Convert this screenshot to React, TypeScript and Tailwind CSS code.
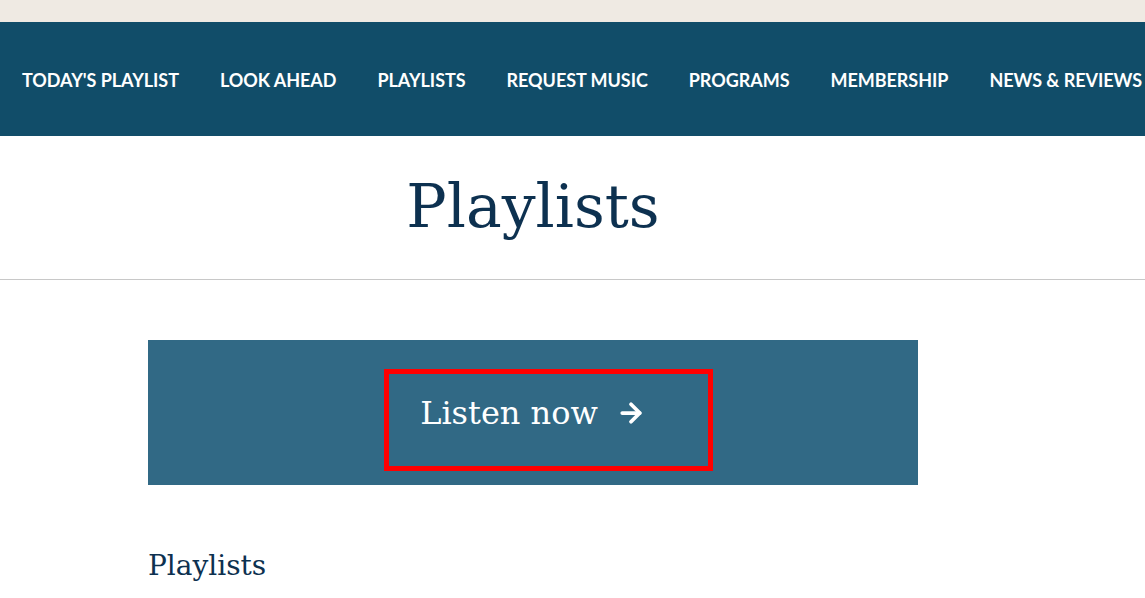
import { ArrowRight } from "lucide-react"

const navItems = [
  "TODAY'S PLAYLIST",
  "LOOK AHEAD",
  "PLAYLISTS",
  "REQUEST MUSIC",
  "PROGRAMS",
  "MEMBERSHIP",
  "NEWS & REVIEWS",
]

export default function App() {
  return (
    <div className="min-h-screen bg-white overflow-hidden" style={{ width: 1145 }}>
      <div className="h-[22px] bg-[#efeae3]" />

      <nav className="h-[114px] bg-[#114d69] flex items-center pl-[22px] pt-[2px] gap-[41px] whitespace-nowrap">
        {navItems.map((item) => (
          <a
            key={item}
            href="#"
            className="text-white font-bold text-[18px] tracking-[-0.05px] font-['Lato',sans-serif]"
          >
            {item}
          </a>
        ))}
      </nav>

      <header className="h-[144px] border-b border-[#c8c8c8] flex items-center">
        <div className="ml-[148px] w-[770px] flex justify-center pb-[4px]">
          <h1 className="text-[60px] text-[#0d3150] font-['DejaVu_Serif',serif] leading-none">
            Playlists
          </h1>
        </div>
      </header>

      <main className="ml-[148px] w-[770px] pt-[60px]">
        <div className="h-[145px] bg-[#316985] flex items-center justify-center">
          <a href="#" className="relative flex items-center h-[40px] text-white">
            <span className="text-[32px] font-['DejaVu_Serif',serif] leading-none">Listen now</span>
            <ArrowRight className="ml-[18px] w-[30px] h-[30px]" strokeWidth={3} />
            <span className="absolute -left-[36px] -right-[67px] -top-[24px] -bottom-[38px] border-[5px] border-[#ff0000]" />
          </a>
        </div>

        <h2 className="mt-[67px] text-[28px] text-[#0d3150] font-['DejaVu_Serif',serif] leading-none">
          Playlists
        </h2>
      </main>
    </div>
  )
}
